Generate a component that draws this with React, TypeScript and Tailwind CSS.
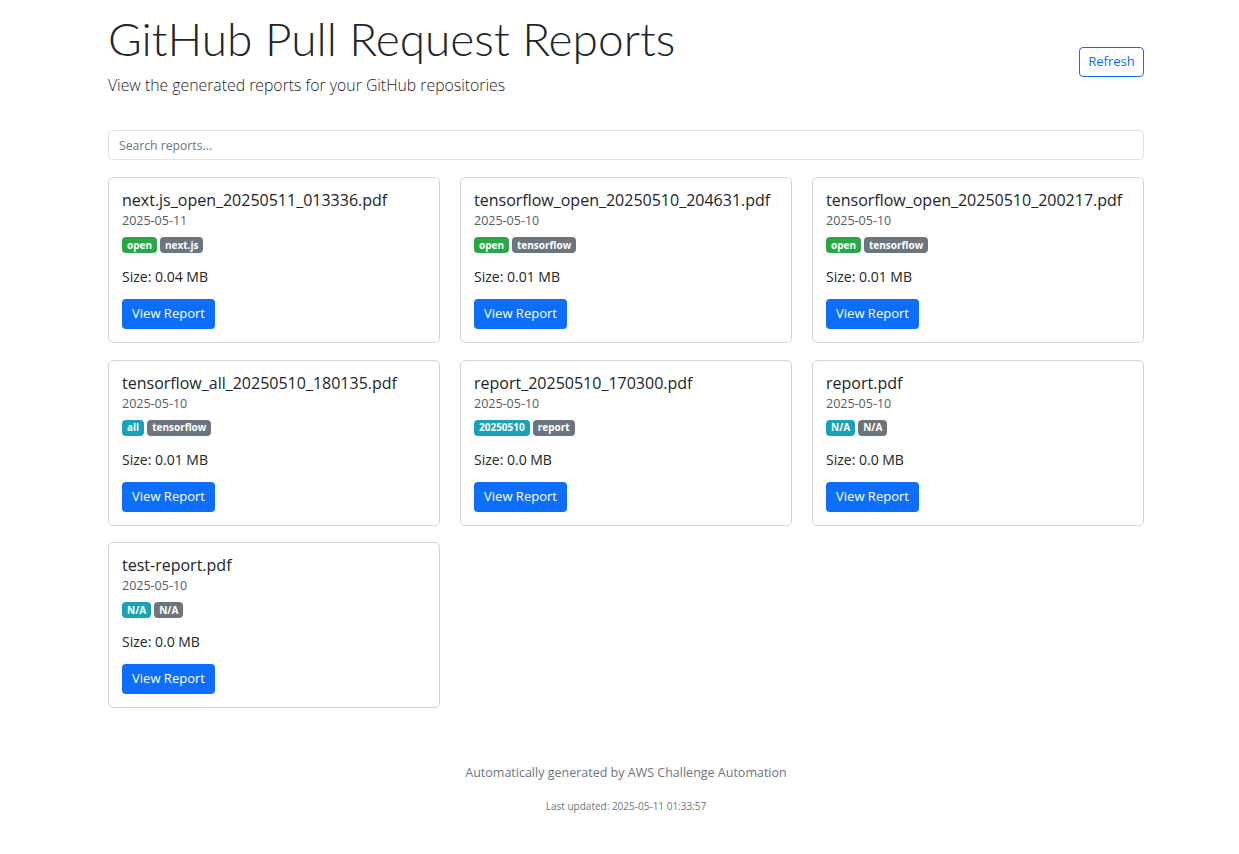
import React from "react";

type Report = {
  name: string;
  date: string;
  tags: { label: string; color: string }[];
  size: string;
};

const green = "bg-[#28a745]";
const gray = "bg-[#6c757d]";
const teal = "bg-[#17a2b8]";

const reports: Report[] = [
  { name: "next.js_open_20250511_013336.pdf", date: "2025-05-11", tags: [{ label: "open", color: green }, { label: "next.js", color: gray }], size: "0.04" },
  { name: "tensorflow_open_20250510_204631.pdf", date: "2025-05-10", tags: [{ label: "open", color: green }, { label: "tensorflow", color: gray }], size: "0.01" },
  { name: "tensorflow_open_20250510_200217.pdf", date: "2025-05-10", tags: [{ label: "open", color: green }, { label: "tensorflow", color: gray }], size: "0.01" },
  { name: "tensorflow_all_20250510_180135.pdf", date: "2025-05-10", tags: [{ label: "all", color: teal }, { label: "tensorflow", color: gray }], size: "0.01" },
  { name: "report_20250510_170300.pdf", date: "2025-05-10", tags: [{ label: "20250510", color: teal }, { label: "report", color: gray }], size: "0.0" },
  { name: "report.pdf", date: "2025-05-10", tags: [{ label: "N/A", color: teal }, { label: "N/A", color: gray }], size: "0.0" },
  { name: "test-report.pdf", date: "2025-05-10", tags: [{ label: "N/A", color: teal }, { label: "N/A", color: gray }], size: "0.0" },
];

function ReportCard({ r }: { r: Report }) {
  return (
    <div className="h-[166px] rounded-[5px] border border-[#d4d4d4] bg-white px-[13px] pt-[11px]">
      <div className="text-[16px] leading-[22px] text-[#212529]">{r.name}</div>
      <div className="mt-[1px] text-[12.5px] leading-[18px] text-[#555b61]">{r.date}</div>
      <div className="mt-[7px] flex gap-[3px]">
        {r.tags.map((t, i) => (
          <span
            key={i}
            className={`${t.color} flex h-[16px] items-center rounded-[4px] px-[5px] text-[10px] font-bold text-white`}
          >
            {t.label}
          </span>
        ))}
      </div>
      <div className="mt-[15px] text-[14px] leading-[18px] text-[#212529]">Size: {r.size} MB</div>
      <button className="mt-[13px] h-[30px] w-[93px] rounded-[4px] bg-[#0d6efd] text-[13px] text-white">
        View Report
      </button>
    </div>
  );
}

export default function App() {
  return (
    <div className="min-h-screen bg-white font-['Open_Sans',sans-serif] text-[#212529]">
      <div className="ml-[108px] w-[1036px]">
        <header className="flex items-start justify-between pt-[12px]">
          <div>
            <h1 className="font-['Lato',sans-serif] text-[46px] font-light leading-[54px] text-[#212529]">
              GitHub Pull Request Reports
            </h1>
            <p className="mt-[8px] text-[15.8px] font-light leading-[22px] text-[#212529]">
              View the generated reports for your GitHub repositories
            </p>
          </div>
          <button className="mt-[35px] h-[30px] w-[65px] rounded-[4px] border border-[#0d6efd] text-[13px] text-[#0d6efd]">
            Refresh
          </button>
        </header>

        <input
          className="mt-[34px] h-[30px] w-full rounded-[5px] border border-[#dee2e6] px-[10px] text-[12.2px] outline-none placeholder:text-[#6c757d]"
          placeholder="Search reports..."
        />

        <div className="mt-[17px] grid grid-cols-3 gap-x-[20px] gap-y-[16.5px]">
          {reports.map((r) => (
            <ReportCard key={r.name} r={r} />
          ))}
        </div>

        <footer className="mt-[56px] text-center text-[#6c757d]">
          <p className="text-[12.5px] leading-[18px]">Automatically generated by AWS Challenge Automation</p>
          <p className="mt-[17px] text-[10px] leading-[14px]">Last updated: 2025-05-11 01:33:57</p>
        </footer>
      </div>
    </div>
  );
}
